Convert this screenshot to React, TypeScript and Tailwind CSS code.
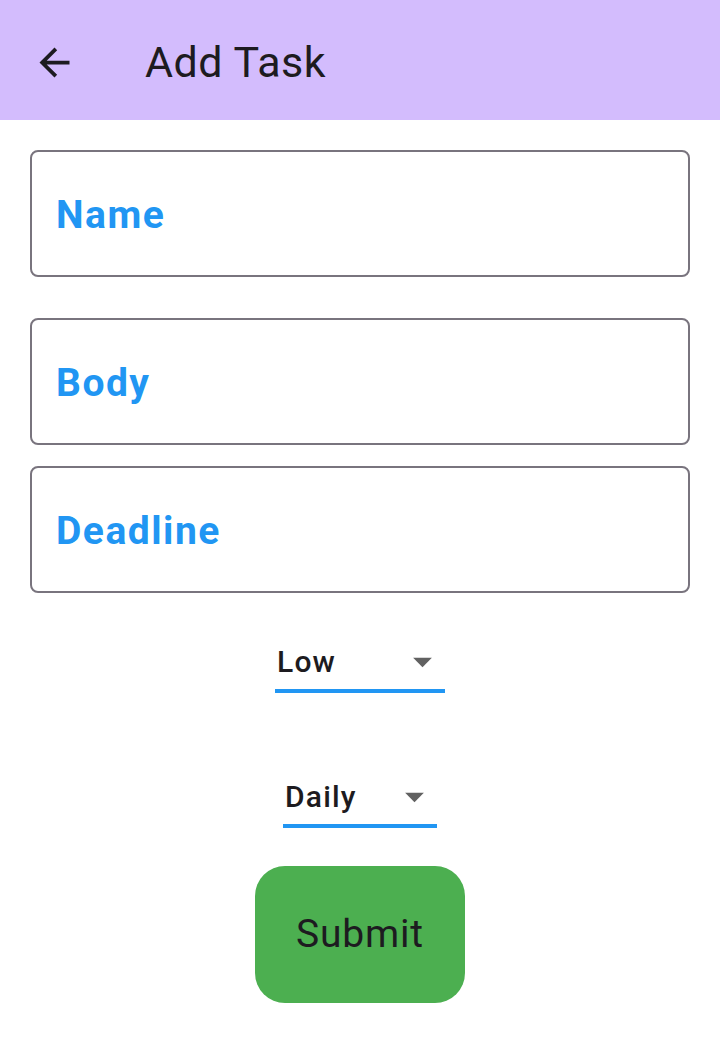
import React from "react";

function ArrowBack() {
  return (
    <svg width="45" height="45" viewBox="0 0 24 24" fill="#1d1b20">
      <path d="M20 11H7.83l5.59-5.59L12 4l-8 8 8 8 1.41-1.41L7.83 13H20v-2z" />
    </svg>
  );
}

function DropArrow() {
  return (
    <svg width="45" height="45" viewBox="0 0 24 24" fill="#616161">
      <path d="M7 10l5 5 5-5z" />
    </svg>
  );
}

function Field({ label, className }: { label: string; className?: string }) {
  return (
    <div
      className={
        "box-border h-[127px] w-full rounded-[8px] border-2 border-[#79747e] flex items-center pl-[24px] pt-[3px] " +
        (className ?? "")
      }
    >
      <span className="text-[39px] font-bold tracking-[1.5px] text-[#2196f3] leading-none">{label}</span>
    </div>
  );
}

function Dropdown({ value, width, className }: { value: string; width: string; className?: string }) {
  return (
    <div className={"mx-auto flex flex-col " + width + " " + (className ?? "")}>
      <div className="flex h-[45px] items-center justify-between pl-[2px]">
        <span className="text-[30px] font-medium tracking-[1.2px] leading-[45px] text-[#1d1b20]">{value}</span>
        <DropArrow />
      </div>
      <div className="mt-[5px] h-[4px] w-full bg-[#2196f3]" />
    </div>
  );
}

export default function App() {
  return (
    <div className="min-h-[1055px] w-[720px] bg-white" style={{ fontFamily: "Roboto, 'Noto Sans', sans-serif" }}>
      <header className="flex h-[120px] items-center bg-[#d3bcfd] pl-[32px] pt-[4px]">
        <ArrowBack />
        <h1 className="ml-[68px] text-[43px] font-normal tracking-[0.5px] leading-none text-[#1d1b20]">Add Task</h1>
      </header>
      <main className="flex flex-col px-[30px]">
        <Field label="Name" className="mt-[30px]" />
        <Field label="Body" className="mt-[41px]" />
        <Field label="Deadline" className="mt-[21px]" />
        <Dropdown value="Low" width="w-[170px]" className="mt-[46px]" />
        <Dropdown value="Daily" width="w-[154px]" className="mt-[81px]" />
        <button className="mx-auto mt-[38px] flex h-[137px] w-[210px] items-center justify-center rounded-[30px] bg-[#4caf50] text-[39px] font-normal tracking-[0.8px] text-[#1d1b20]">
          Submit
        </button>
      </main>
    </div>
  );
}
